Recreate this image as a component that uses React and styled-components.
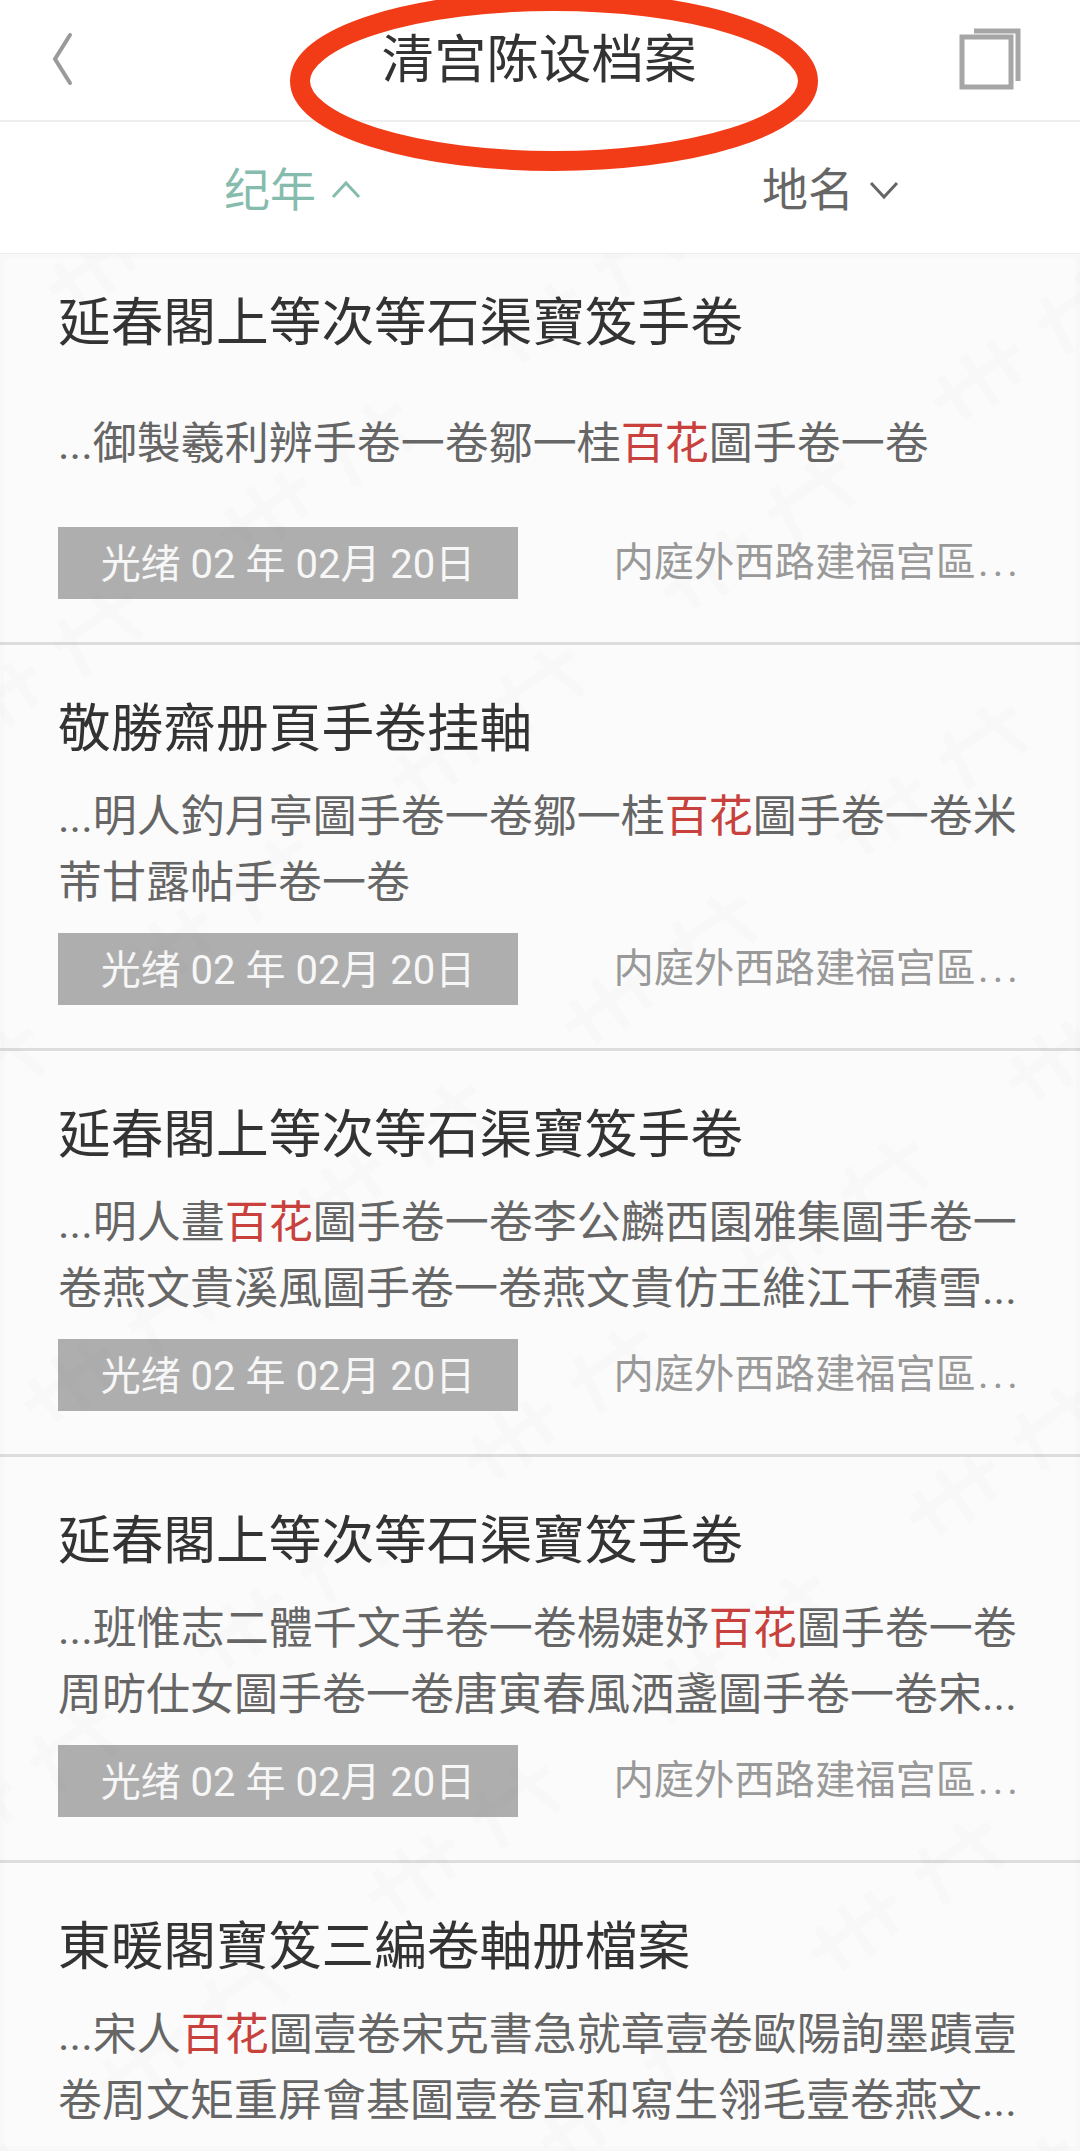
import React from 'react';
import styled, { createGlobalStyle } from 'styled-components';

const CJK = `Roboto, "Noto Sans CJK SC", "Noto Sans CJK TC", sans-serif`;

const records = [
  {
    title: '延春閣上等次等石渠寶笈手卷',
    lines: ['...御製羲利辨手卷一卷鄒一桂百花圖手卷一卷'],
    first: true,
  },
  {
    title: '敬勝齋册頁手卷挂軸',
    lines: ['...明人釣月亭圖手卷一卷鄒一桂百花圖手卷一卷米', '芾甘露帖手卷一卷'],
  },
  {
    title: '延春閣上等次等石渠寶笈手卷',
    lines: ['...明人畫百花圖手卷一卷李公麟西園雅集圖手卷一', '卷燕文貴溪風圖手卷一卷燕文貴仿王維江干積雪...'],
  },
  {
    title: '延春閣上等次等石渠寶笈手卷',
    lines: ['...班惟志二體千文手卷一卷楊婕妤百花圖手卷一卷', '周昉仕女圖手卷一卷唐寅春風洒盞圖手卷一卷宋...'],
  },
  {
    // last row runs off the bottom of the screen, its date row is below the fold
    title: '東暖閣寶笈三編卷軸册檔案',
    lines: ['...宋人百花圖壹卷宋克書急就章壹卷歐陽詢墨蹟壹', '卷周文矩重屏會基圖壹卷宣和寫生翎毛壹卷燕文...'],
    noMeta: true,
  },
];

function Highlighted({ text }) {
  const [before, after] = text.split('百花');
  if (after === undefined) return text;
  return (
    <>
      {before}
      <Hit>百花</Hit>
      {after}
    </>
  );
}

function Record({ item }) {
  return (
    <Card $first={item.first}>
      <CardTitle>{item.title}</CardTitle>
      <Excerpt>
        {item.lines.map((line) => (
          <ExcerptLine key={line}>
            <Highlighted text={line} />
          </ExcerptLine>
        ))}
      </Excerpt>
      {!item.noMeta && (
        <Meta>
          <DateTag>光绪 02 年 02月 20日</DateTag>
          <Place>
            内庭外西路建福宫區<Dots>...</Dots>
          </Place>
        </Meta>
      )}
    </Card>
  );
}

export default function App() {
  return (
    <>
      <GlobalStyle />
      <Page>
        <Header>
          <BackIcon width="34" height="56" viewBox="0 0 34 56">
            <path d="M24 4 L9 28 L24 52" />
          </BackIcon>
          <HeaderTitle>清宫陈设档案</HeaderTitle>
          <CopyIcon width="64" height="64" viewBox="0 0 64 64">
            <rect x="4" y="10" width="49" height="50" />
            <path d="M16 4 H60 V54" />
          </CopyIcon>
        </Header>
        <Tabs>
          <Tab $active>
            纪年
            <Chevron width="30" height="20" viewBox="0 0 30 20">
              <path d="M2 17 L15 3 L28 17" />
            </Chevron>
          </Tab>
          <Tab>
            地名
            <Chevron width="30" height="20" viewBox="0 0 30 20">
              <path d="M2 3 L15 17 L28 3" />
            </Chevron>
          </Tab>
        </Tabs>
        <List>
          {records.map((item, i) => (
            <Record key={i} item={item} />
          ))}
        </List>
        {/* faint diagonal watermark that lies over the list */}
        <Watermark width="1080" height="1897" viewBox="0 0 1080 1897">
          <defs>
            <pattern id="wm" width="330" height="300" patternUnits="userSpaceOnUse" patternTransform="rotate(-35)">
              <path d="M20 60 H120 M40 40 V90 M70 35 V95 M100 40 V90 M150 55 H240 M170 35 L160 95 M210 35 L225 95" />
            </pattern>
          </defs>
          <rect width="1080" height="1897" fill="url(#wm)" />
        </Watermark>
        <RedCircle width="1080" height="190" viewBox="0 0 1080 190">
          <ellipse cx="554" cy="81" rx="254" ry="80" />
        </RedCircle>
      </Page>
    </>
  );
}

const GlobalStyle = createGlobalStyle`
  html, body {
    margin: 0;
    padding: 0;
    background: #fbfbfb;
  }
  * {
    box-sizing: border-box;
  }
`;

const Page = styled.div`
  position: relative;
  width: 1080px;
  height: 2151px;
  overflow: hidden;
  background: #fbfbfb;
  font-family: ${CJK};
`;

const Header = styled.header`
  display: flex;
  align-items: center;
  justify-content: space-between;
  height: 122px;
  padding: 0 58px 3px 46px;
  background: #fff;
  border-bottom: 2px solid #eeeeee;
`;

const BackIcon = styled.svg`
  fill: none;
  stroke: #9a9a9a;
  stroke-width: 4;
  stroke-linecap: round;
  stroke-linejoin: miter;
`;

const HeaderTitle = styled.h1`
  margin: 3px 0 0 40px;
  font-size: 52.5px;
  line-height: 70px;
  font-weight: 400;
  color: #333;
`;

const CopyIcon = styled.svg`
  fill: none;
  stroke: #a6a6a6;
  stroke-width: 5;
`;

const Tabs = styled.nav`
  display: flex;
  align-items: center;
  gap: 401px;
  height: 132px;
  padding: 4px 0 0 224px;
  background: #fff;
  border-bottom: 1px solid #ededed;
`;

const Tab = styled.div`
  display: flex;
  align-items: center;
  gap: 15px;
  font-size: 46px;
  line-height: 60px;
  color: ${(p) => (p.$active ? '#86bcae' : '#666')};
  svg {
    stroke: ${(p) => (p.$active ? '#86bcae' : '#666')};
  }
`;

const Chevron = styled.svg`
  fill: none;
  stroke-width: 3;
`;

const List = styled.main`
  display: flex;
  flex-direction: column;
`;

const Card = styled.article`
  display: flex;
  flex-direction: column;
  flex-shrink: 0;
  height: ${(p) => (p.$first ? '391px' : '406px')};
  padding: ${(p) => (p.$first ? '31px' : '46px')} 62px 0 58px;
  border-bottom: 3px solid #dddddd;
`;

const CardTitle = styled.h2`
  margin: 0;
  font-size: 52.7px;
  line-height: 76px;
  font-weight: 400;
  color: #333;
  white-space: nowrap;
`;

const Excerpt = styled.div`
  display: flex;
  flex-direction: column;
  justify-content: center;
  height: 132px;
  margin-top: 17px;
`;

const ExcerptLine = styled.div`
  font-size: 44px;
  line-height: 66px;
  color: #666;
  white-space: nowrap;
`;

const Hit = styled.span`
  color: #c8413c;
`;

const Meta = styled.div`
  display: flex;
  align-items: center;
  justify-content: space-between;
  margin-top: 17px;
`;

const DateTag = styled.div`
  display: flex;
  align-items: center;
  justify-content: center;
  width: 460px;
  height: 72px;
  padding-bottom: 4px;
  background: #aeaeae;
  color: #f7f7f7;
  font-size: 40px;
  white-space: nowrap;
`;

const Place = styled.div`
  margin-right: -4px;
  font-size: 40.3px;
  line-height: 72px;
  color: #999;
  white-space: nowrap;
`;

const Dots = styled.span`
  margin-left: 2px;
  letter-spacing: 4px;
`;

const Watermark = styled.svg`
  position: absolute;
  left: 0;
  top: 254px;
  pointer-events: none;
  stroke: rgba(0, 0, 0, 0.012);
  stroke-width: 9;
  fill: none;
`;

const RedCircle = styled.svg`
  position: absolute;
  left: 0;
  top: 0;
  fill: none;
  stroke: #f23c17;
  stroke-width: 20;
`;
